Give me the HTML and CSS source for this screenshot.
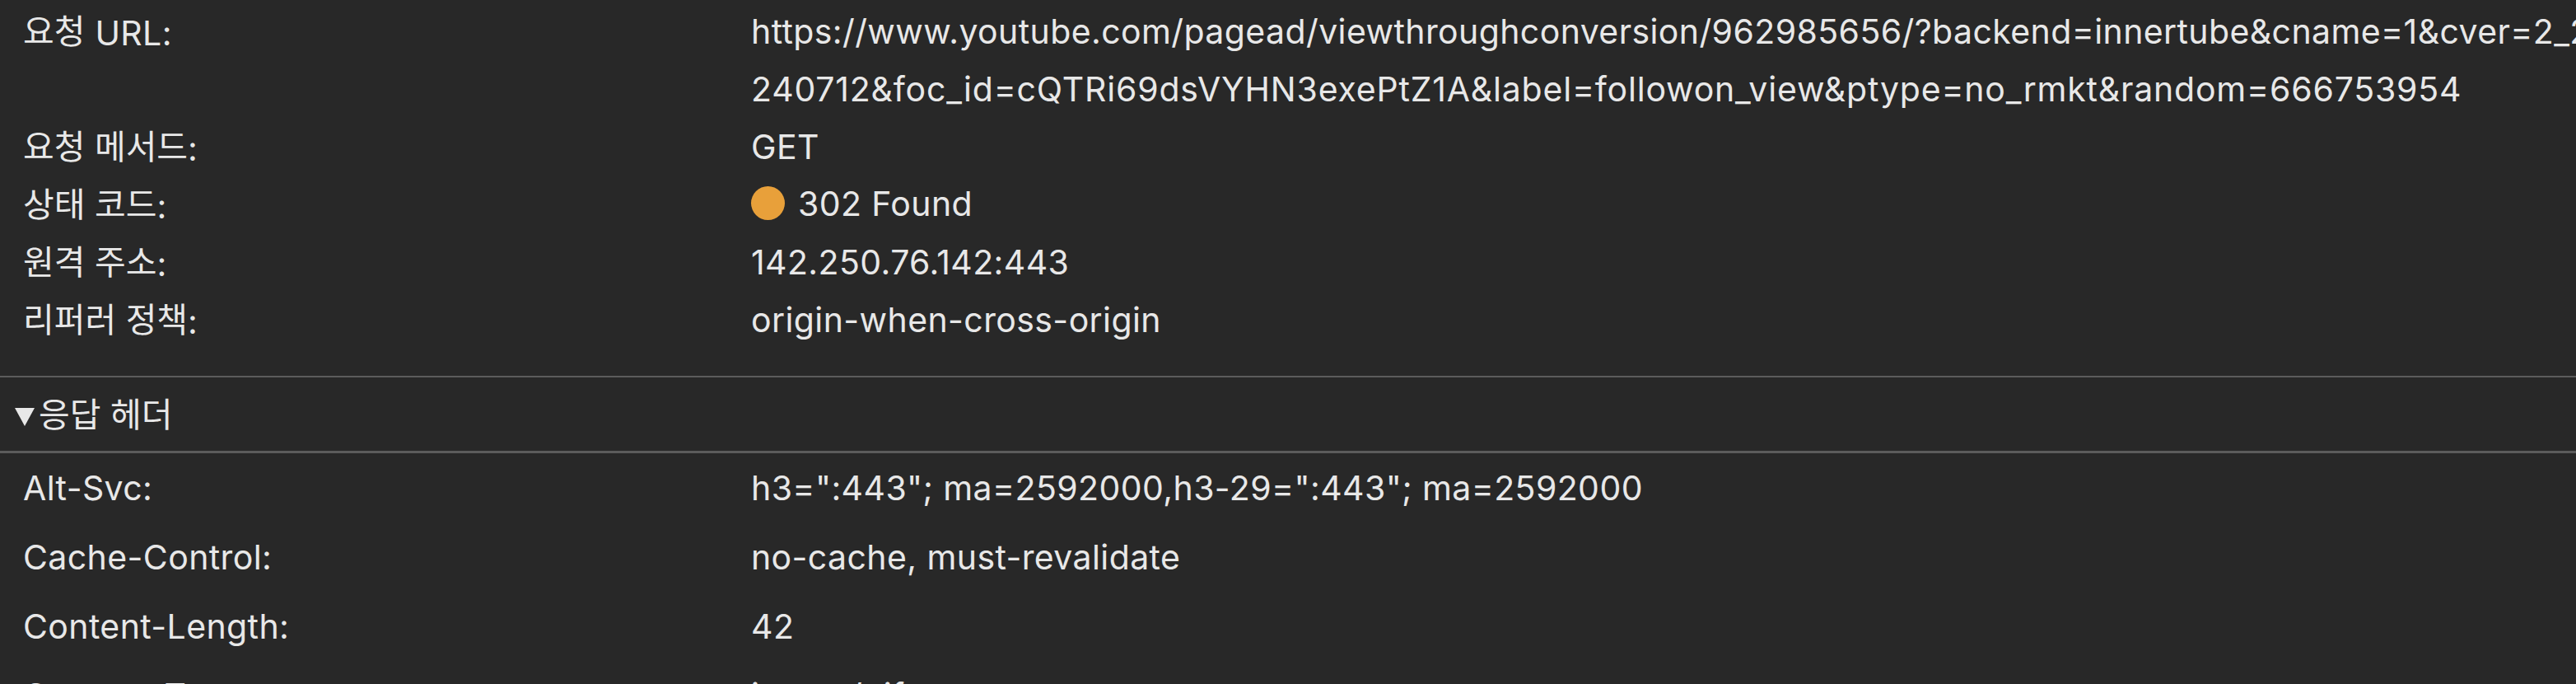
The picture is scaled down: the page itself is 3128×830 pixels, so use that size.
FILE: index.html
```html
<!DOCTYPE html>
<html lang="ko">
<head>
<meta charset="utf-8">
<title>Headers</title>
<link rel="stylesheet" href="styles.css">
</head>
<body>
<div class="panel">
  <section class="summary">
    <div class="row">
      <div class="label"><span class="ko">요청</span> URL:</div>
      <div class="value url">
        <div class="line">https://www.youtube.com/pagead/viewthroughconversion/962985656/?backend=innertube&amp;cname=1&amp;cver=2_20</div>
        <div class="line wide">240712&amp;foc_id=cQTRi69dsVYHN3exePtZ1A&amp;label=followon_view&amp;ptype=no_rmkt&amp;random=666753954</div>
      </div>
    </div>
    <div class="row">
      <div class="label"><span class="ko">요청 메서드</span>:</div>
      <div class="value"><div class="line">GET</div></div>
    </div>
    <div class="row">
      <div class="label"><span class="ko">상태 코드</span>:</div>
      <div class="value"><div class="line status"><span class="dot"></span><span>302 Found</span></div></div>
    </div>
    <div class="row">
      <div class="label"><span class="ko">원격 주소</span>:</div>
      <div class="value"><div class="line">142.250.76.142:443</div></div>
    </div>
    <div class="row">
      <div class="label"><span class="ko">리퍼러 정책</span>:</div>
      <div class="value"><div class="line">origin-when-cross-origin</div></div>
    </div>
  </section>
  <div class="section-head"><span class="tri"></span><span class="ko">응답 헤더</span></div>
  <section class="headers">
    <div class="hrow"><div class="label">Alt-Svc:</div><div class="value">h3=":443"; ma=2592000,h3-29=":443"; ma=2592000</div></div>
    <div class="hrow"><div class="label">Cache-Control:</div><div class="value">no-cache, must-revalidate</div></div>
    <div class="hrow"><div class="label">Content-Length:</div><div class="value">42</div></div>
    <div class="hrow"><div class="label">Content-Type:</div><div class="value">image/gif</div></div>
  </section>
</div>
</body>
</html>
```
FILE: styles.css
```css
html, body {
  margin: 0;
  padding: 0;
  background: #282828;
  overflow: hidden;
}
body {
  width: 3128px;
  height: 830px;
  font-family: Inter, "Noto Sans CJK KR", sans-serif;
  font-size: 41px;
  letter-spacing: 0.4px;
  color: #e8e8e8;
}
.panel {
  display: flex;
  flex-direction: column;
}
.summary {
  padding: 3px 0 33px 0;
  border-bottom: 2px solid #5c5c5c;
}
.row, .hrow {
  display: grid;
  grid-template-columns: 884px 1fr;
  padding-left: 28px;
}
.row { line-height: 70px; }
.row .label { height: 70px; overflow: visible; position: relative; top: -1px; }
.line { height: 70px; }
.line.wide { letter-spacing: 0.8px; }
.status .dot + span { position: relative; top: -1px; }
.hrow { line-height: 84px; height: 84px; }
.hrow .label, .hrow .value { height: 84px; }
.label, .value, .line {
  white-space: nowrap;
}
.ko {
  font-family: "Noto Sans CJK KR", sans-serif;
  font-size: 41px;
  letter-spacing: 0;
  position: relative;
  top: -2px;
}
.status {
  display: flex;
  align-items: center;
  gap: 16px;
}
.dot {
  width: 41px;
  height: 41px;
  border-radius: 50%;
  background: #e8a03a;
  flex: none;
  position: relative;
  top: -2px;
}
.section-head {
  height: 89px;
  display: flex;
  align-items: center;
  padding-left: 18px;
  gap: 5px;
  border-bottom: 3px solid #5c5c5c;
  line-height: 89px;
}
.section-head .ko { top: -2px; }
.tri {
  width: 0;
  height: 0;
  border-left: 12.5px solid transparent;
  border-right: 12.5px solid transparent;
  border-top: 22px solid #e8e8e8;
  margin-top: 6px;
}
```
